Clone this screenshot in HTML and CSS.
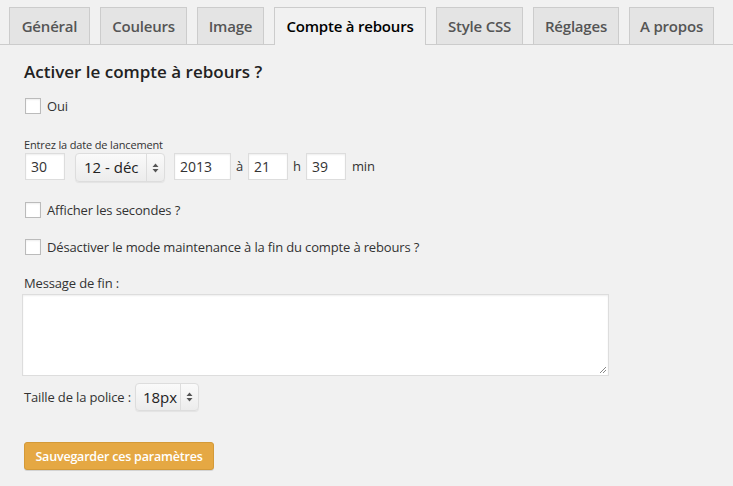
FILE: index.html
```html
<!DOCTYPE html>
<html lang="fr">
<head>
<meta charset="utf-8">
<link rel="stylesheet" href="styles.css">
</head>
<body>
<nav class="tabs">
  <a class="tab t1">Général</a>
  <a class="tab t2">Couleurs</a>
  <a class="tab t3">Image</a>
  <a class="tab t4 active">Compte à rebours</a>
  <a class="tab t5">Style CSS</a>
  <a class="tab t6">Réglages</a>
  <a class="tab t7">A propos</a>
</nav>
<main class="panel">
  <h2 class="title">Activer le compte à rebours ?</h2>
  <label class="check first"><span class="box"></span>Oui</label>

  <div class="small-label">Entrez la date de lancement</div>
  <div class="date-row">
    <span class="input w40">30</span>
    <span class="select month"><span class="sel-text">12 - déc</span><span class="sel-arrow"><svg width="7" height="10" viewBox="0 0 7 10"><path d="M3.5 0.5 L6.5 4 L0.5 4 Z M3.5 9.5 L6.5 6 L0.5 6 Z" fill="#555"/></svg></span></span>
    <span class="input w56">2013</span>
    <span class="sep">à</span>
    <span class="input w40">21</span>
    <span class="sep">h</span>
    <span class="input w40">39</span>
    <span class="sep last">min</span>
  </div>

  <label class="check second"><span class="box"></span>Afficher les secondes ?</label>
  <label class="check third"><span class="box"></span>Désactiver le mode maintenance à la fin du compte à rebours ?</label>

  <div class="msg-label">Message de fin :</div>
  <div class="textarea"><svg class="grip" width="8" height="8" viewBox="0 0 8 8"><path d="M1 7 L7 1 M4 7 L7 4" stroke="#888" stroke-width="1"/></svg></div>

  <div class="size-row">
    <span class="size-label">Taille de la police :</span>
    <span class="select size"><span class="sel-text">18px</span><span class="sel-arrow"><svg width="7" height="10" viewBox="0 0 7 10"><path d="M3.5 0.5 L6.5 4 L0.5 4 Z M3.5 9.5 L6.5 6 L0.5 6 Z" fill="#555"/></svg></span></span>
  </div>

  <button class="save">Sauvegarder ces paramètres</button>
</main>
</body>
</html>
```
FILE: styles.css
```css
* { box-sizing: border-box; }
html, body { margin: 0; padding: 0; }
body {
  background: #f1f1f1;
  font-family: "Open Sans", "Liberation Sans", sans-serif;
  color: #333;
  width: 733px;
  height: 486px;
  overflow: hidden;
}
.tabs {
  display: flex;
  gap: 10px;
  padding: 7px 0 0 9px;
  border-bottom: 1px solid #ccc;
  height: 45px;
}
.tab {
  display: block;
  flex: none;
  height: 37px;
  padding: 0;
  text-align: center;
  white-space: nowrap;
  border: 1px solid #ccc;
  border-bottom: none;
  background: #e4e4e4;
  color: #555;
  font-size: 15px;
  font-weight: 600;
  letter-spacing: -0.2px;
  line-height: 36px;
}
.t1 { width: 81px; }
.t2 { width: 87px; }
.t3 { width: 67px; }
.t4 { width: 152px; }
.t5 { width: 87px; }
.t6 { width: 86px; }
.t7 { width: 85px; }
.tab.active {
  background: #f1f1f1;
  color: #000;
  height: 38px;
  margin-bottom: -1px;
}
.panel {
  padding: 0 0 0 24px;
  letter-spacing: -0.15px;
}
.title {
  margin: 15px 0 0 0;
  font-size: 17px;
  font-weight: 600;
  color: #222;
  line-height: 24px;
  letter-spacing: 0;
}
.check {
  display: flex;
  align-items: center;
  gap: 6px;
  font-size: 13px;
  color: #333;
  height: 16px;
  margin-left: 1px;
}
.check.first { margin-top: 14px; }
.check.second { margin-top: 20px; }
.check.third { margin-top: 21px; }
.box {
  width: 16px;
  height: 16px;
  background: #fff;
  border: 1px solid #bbb;
  box-shadow: inset 0 1px 2px rgba(0,0,0,0.07);
}
.small-label {
  margin-top: 24px;
  font-size: 11px;
  color: #333;
  line-height: 14px;
}
.date-row {
  display: flex;
  align-items: center;
  margin-top: 1px;
  margin-left: 1px;
  height: 29px;
  font-size: 13px;
}
.input {
  display: block;
  height: 27px;
  background: #fff;
  border: 1px solid #ddd;
  box-shadow: inset 0 1px 2px rgba(0,0,0,0.07);
  padding: 0 5px;
  line-height: 25px;
  font-size: 14px;
  letter-spacing: 0;
  color: #333;
  align-self: flex-start;
}
.w40 { width: 40px; }
.w56 { width: 57px; }
.date-row .month { margin: 0 9px 0 10px; width: 90px; height: 29px; }
.sep { margin: 0 5px 0 5px; color: #333; align-self: flex-start; line-height: 27px; }
.sep.last { margin-left: 6px; }
.select {
  display: flex;
  align-items: stretch;
  height: 27px;
  border: 1px solid #ddd;
  border-radius: 4px;
  background: linear-gradient(#fafafa, #ececec);
  box-shadow: 0 1px 1px rgba(0,0,0,0.06);
  color: #222;
  font-size: 15px;
  letter-spacing: 0;
}
.sel-text {
  flex: 1;
  padding-left: 8px;
  line-height: 26px;
}
.sel-arrow {
  width: 18px;
  border-left: 1px solid #ddd;
  display: flex;
  align-items: center;
  justify-content: center;
}
.msg-label {
  margin-top: 20px;
  font-size: 13px;
  color: #333;
  line-height: 16px;
}
.textarea {
  position: relative;
  width: 587px;
  height: 82px;
  margin: 3px 0 0 -2px;
  background: #fff;
  border: 1px solid #ddd;
  box-shadow: inset 0 1px 2px rgba(0,0,0,0.07);
}
.grip { position: absolute; right: 1px; bottom: 1px; }
.size-row {
  display: flex;
  align-items: center;
  margin-top: 7px;
  height: 28px;
  font-size: 13px;
}
.size-label { margin-right: 4px; }
.select.size { width: 64px; height: 28px; }
.select.size .sel-text { padding-left: 7px; }
.save {
  display: block;
  margin-top: 31px;
  width: 190px;
  height: 28px;
  background: #e5a843;
  border: 1px solid #d49a38;
  border-radius: 3px;
  color: #fff;
  font-family: "Open Sans", "Liberation Sans", sans-serif;
  font-size: 12.5px;
  font-weight: 600;
  letter-spacing: -0.2px;
  padding: 0;
  box-shadow: 0 1px 0 rgba(0,0,0,0.12);
}
```
